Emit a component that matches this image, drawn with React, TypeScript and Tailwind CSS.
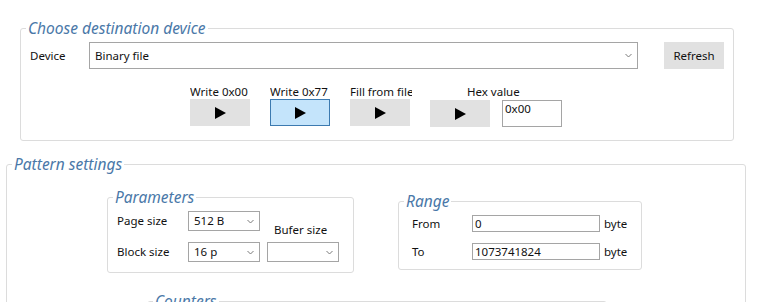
import type { ReactNode } from 'react'

const font = { fontFamily: '"Noto Sans", "Open Sans", sans-serif' }

function Chevron() {
  return (
    <svg width="7" height="5" viewBox="0 0 7 5" className="shrink-0">
      <path d="M0.5 1 L3.5 4 L6.5 1" fill="none" stroke="#7a7a7a" strokeWidth="1" />
    </svg>
  )
}

function Play() {
  return (
    <svg width="11" height="12" viewBox="0 0 11 12">
      <polygon points="0,0 11,6 0,12" fill="#000" />
    </svg>
  )
}

function Combo({ value, className }: { value: string; className: string }) {
  return (
    <div className={`flex items-center justify-between border border-[#a5a5a5] bg-white pl-[5px] pr-[5px] ${className}`}>
      <span className="leading-none">{value}</span>
      <Chevron />
    </div>
  )
}

function Group({ title, className, children }: { title: string; className: string; children?: ReactNode }) {
  return (
    <fieldset className={`rounded-[3px] border border-[#dcdcdc] ${className}`}>
      <legend className="ml-[5px] px-[2px] text-[15.5px] italic leading-[20px] text-[#4a78a8]">{title}</legend>
      {children}
    </fieldset>
  )
}

// kolumna: podpis nad przyciskiem
function WriteButton({ label, active = false }: { label: string; active?: boolean }) {
  return (
    <div className="flex flex-col">
      <span className="-mr-[2px] h-[15px] w-[62px] overflow-hidden whitespace-nowrap leading-[15px]">{label}</span>
      <button
        className={`flex h-[27px] w-[60px] items-center justify-center border ${
          active ? 'border-[#3c7ab0] bg-[#c4e4fb]' : 'border-[#e1e1e1] bg-[#e1e1e1]'
        }`}
      >
        <Play />
      </button>
    </div>
  )
}

export default function App() {
  return (
    <div className="h-[302px] w-[772px] overflow-hidden bg-white pt-[18px] text-[11.5px] text-[#111]" style={font}>
      <Group title="Choose destination device" className="ml-[20px] w-[714px] pb-[13px]">
        <div className="mt-[4px] flex items-center pl-[9px]">
          <span className="w-[59px]">Device</span>
          <Combo value="Binary file" className="h-[27px] w-[549px]" />
          <button className="ml-[26px] h-[27px] w-[60px] bg-[#e1e1e1]">Refresh</button>
        </div>
        <div className="ml-[169px] mt-[15px] flex items-start gap-[20px]">
          <WriteButton label="Write 0x00" />
          <WriteButton label="Write 0x77" active />
          <WriteButton label="Fill from file" />
          <div className="flex flex-col">
            <span className="ml-[37px] h-[15px] leading-[15px]">Hex value</span>
            <div className="mt-px flex items-start gap-[12px]">
              <button className="flex h-[27px] w-[60px] items-center justify-center bg-[#e1e1e1]">
                <Play />
              </button>
              <div className="h-[27px] w-[60px] border border-[#a5a5a5] pl-[2px] leading-[16px]">0x00</div>
            </div>
          </div>
        </div>
      </Group>

      <Group title="Pattern settings" className="ml-[6px] mt-[13px] w-[740px] pb-[20px]">
        <div className="flex items-start">
          <Group title="Parameters" className="ml-[100px] mt-[13px] w-[247px] pb-[10px]">
            <div className="mt-[4px] pl-[9px]">
              <div className="flex h-[20px] items-start">
                <span className="w-[71px] leading-[20px]">Page size</span>
                <Combo value="512 B" className="h-[20px] w-[72px]" />
                <span className="ml-[14px] mt-[11px] leading-[16px]">Bufer size</span>
              </div>
              <div className="mt-[11px] flex h-[20px] items-center">
                <span className="w-[71px]">Block size</span>
                <Combo value="16 p" className="h-[20px] w-[72px]" />
                <Combo value="" className="ml-[7px] h-[20px] w-[72px]" />
              </div>
            </div>
          </Group>
          <Group title="Range" className="ml-[44px] mt-[17px] w-[244px] pb-[9px]">
            <div className="mt-[4px] pl-[13px]">
              <div className="flex h-[17px] items-center">
                <span className="w-[60px]">From</span>
                <div className="h-[17px] w-[128px] border border-[#a5a5a5] pl-[2px] leading-[15px]">0</div>
                <span className="ml-[4px]">byte</span>
              </div>
              <div className="mt-[11px] flex h-[17px] items-center">
                <span className="w-[60px]">To</span>
                <div className="h-[17px] w-[128px] border border-[#a5a5a5] pl-[2px] leading-[15px]">1073741824</div>
                <span className="ml-[4px]">byte</span>
              </div>
            </div>
          </Group>
        </div>
        <Group title="Counters" className="ml-[140px] mt-[18px] h-[60px] w-[460px]" />
      </Group>
    </div>
  )
}
